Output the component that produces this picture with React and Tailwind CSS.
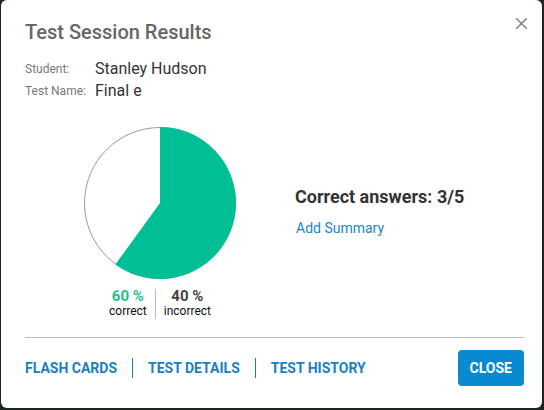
import { X } from "lucide-react";

function Pie() {
  // 60% correct, clockwise from top
  const cx = 78;
  const cy = 78;
  const r = 76;
  const a = (0.6 * 360 * Math.PI) / 180;
  const ex = cx + r * Math.sin(a);
  const ey = cy - r * Math.cos(a);
  return (
    <svg width="156" height="156" viewBox="0 0 156 156">
      <circle cx={cx} cy={cy} r={r - 0.5} fill="#fff" stroke="#9a9a9a" strokeWidth="1" />
      <path
        d={`M ${cx} ${cy} L ${cx} ${cy - r} A ${r} ${r} 0 1 1 ${ex} ${ey} Z`}
        fill="#00bf94"
      />
    </svg>
  );
}

export default function App() {
  return (
    <div
      className="w-[544px] h-[410px] bg-[#1c2623] pl-px"
      style={{ fontFamily: "Roboto, 'Liberation Sans', sans-serif" }}
    >
      <div className="w-[541px] h-[408px] bg-white rounded-md relative pl-6 pr-[18px] pt-[20px]">
        <button
          type="button"
          className="absolute right-[11px] top-[14px] text-[#858585]"
          aria-label="Close"
        >
          <X className="w-[19px] h-[19px]" strokeWidth={1.9} />
        </button>

        <h2 className="text-[20px] font-medium text-[#666] leading-6">
          Test Session Results
        </h2>

        <div className="mt-[15px] flex flex-col gap-[2px]">
          <div className="flex items-center">
            <span className="w-[70px] text-[12px] text-[#777]">Student:</span>
            <span className="text-[16px] text-[#333] leading-5">Stanley Hudson</span>
          </div>
          <div className="flex items-center">
            <span className="w-[70px] text-[12px] text-[#777]">Test Name:</span>
            <span className="text-[16px] text-[#333] leading-5">Final e</span>
          </div>
        </div>

        <div className="flex items-start mt-[24px]">
          <div className="w-[270px] flex flex-col items-center">
            <Pie />
            <div className="flex mt-[8px]">
              <div className="flex flex-col items-center pr-[8px] border-r border-[#bbb]">
                <span className="text-[15px] font-bold text-[#1fbf8f] leading-[15px]">60 %</span>
                <span className="text-[12px] text-[#111] leading-[15px]">correct</span>
              </div>
              <div className="flex flex-col items-center pl-[8px]">
                <span className="text-[15px] font-bold text-[#444] leading-[15px]">40 %</span>
                <span className="text-[12px] text-[#111] leading-[15px]">incorrect</span>
              </div>
            </div>
          </div>
          <div className="mt-[62px] flex flex-col">
            <span className="text-[18px] font-bold text-[#333] leading-5">
              Correct answers: 3/5
            </span>
            <button type="button" className="mt-[11px] text-left text-[14px] text-[#1a86c8] ml-px">
              Add Summary
            </button>
          </div>
        </div>

        <div className="mt-[18px] border-t border-[#bdbdbd]" />

        <div className="flex items-center justify-between mt-[12px]">
          <div className="flex items-center text-[14px] font-bold text-[#1a7fc4]">
            <span className="pr-[15px]">FLASH CARDS</span>
            <span className="h-[20px] border-l border-[#1a7fc4]" />
            <span className="px-[15px]">TEST DETAILS</span>
            <span className="h-[20px] border-l border-[#1a7fc4]" />
            <span className="pl-[15px]">TEST HISTORY</span>
          </div>
          <button
            type="button"
            className="h-[36px] px-[12px] rounded bg-[#0989cf] text-white text-[14px] font-bold"
          >
            CLOSE
          </button>
        </div>
      </div>
    </div>
  );
}
